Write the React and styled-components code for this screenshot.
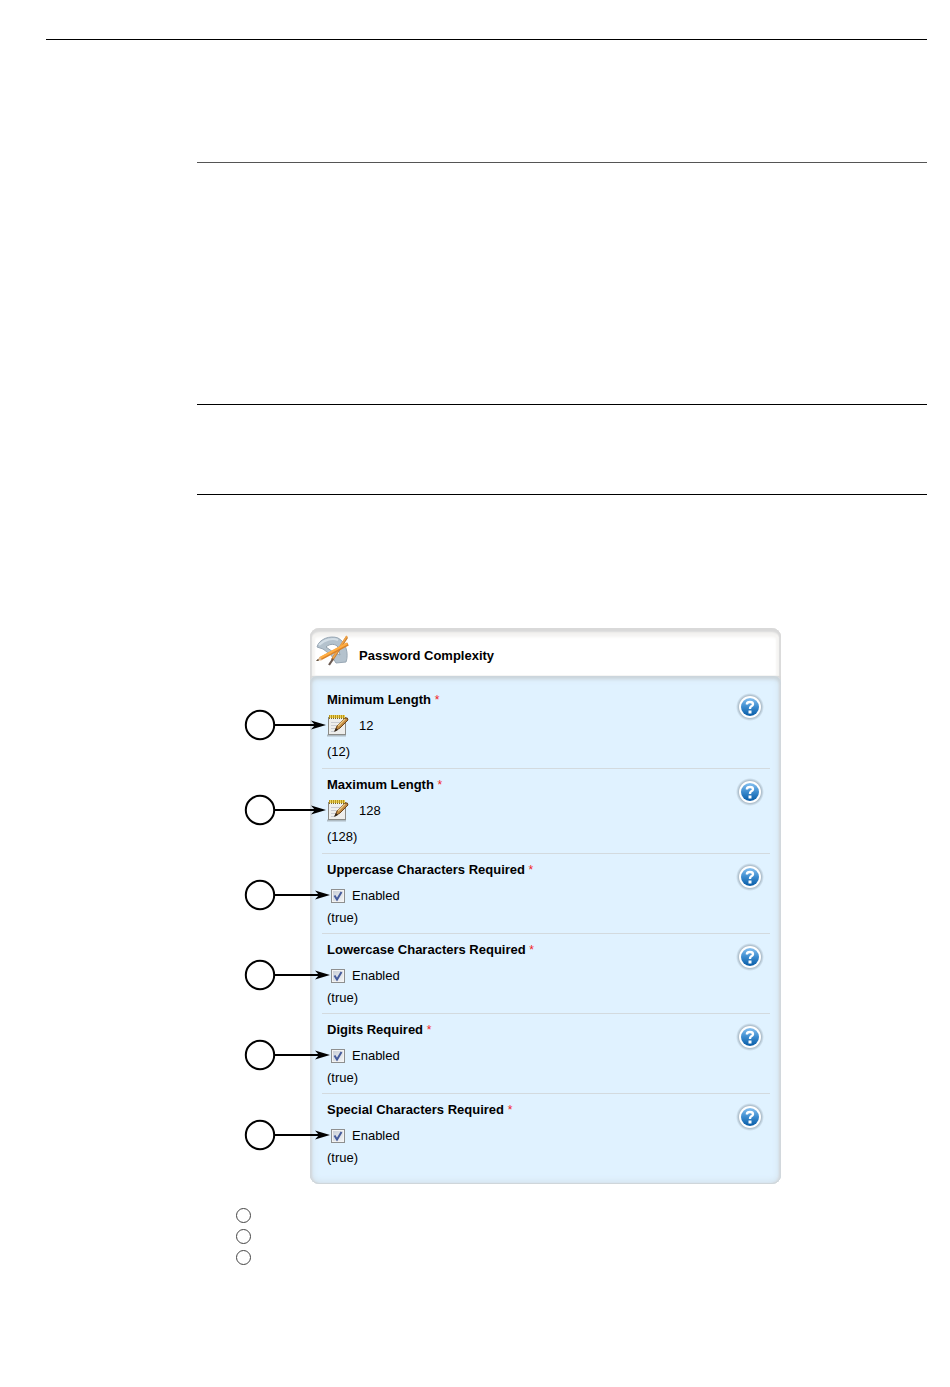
import { useState } from "react";
import styled, { createGlobalStyle } from "styled-components";

const ink = "#000";
const panelBlue = "#e0f2ff";
const line = "#d3dade";

const GlobalStyle = createGlobalStyle`
  body {
    margin: 0;
    background: #fff;
    color: ${ink};
    font-family: "Liberation Sans", Arial, sans-serif;
    font-size: 13px;
    line-height: 16px;
  }
`;

const Page = styled.div`
  padding: 39px 23px 0 46px;
`;

const PageHeader = styled.header`
  border-top: 1px solid ${ink};
  padding-bottom: 122px;
`;

const Content = styled.main`
  margin-left: 151px;
`;

const Section = styled.section`
  border-top: 1px solid ${(props) => props.$color || ink};
  padding-bottom: ${(props) => props.$space}px;
`;

const Figure = styled.figure`
  margin: 0 0 0 113px;
  max-width: 471px;
`;

const Panel = styled.form`
  border-radius: 9px;
  background: #d9d9d9;
`;

const PanelHeader = styled.div`
  display: flex;
  align-items: center;
  gap: 10px;
  padding: 7px 6px 8px;
  border-radius: 9px 9px 0 0;
  background: #fff;
  box-shadow:
    inset 0 4px 2px #d9d9d9,
    inset 2px 0 1px #dcdcdc,
    inset -2px 0 1px #dcdcdc,
    inset 5px 0 2px #f6f5f3,
    inset -5px 0 2px #f6f5f3,
    inset 0 9px 3px #f4f3f1;
`;

const Title = styled.h2`
  margin: 8px 0 0;
  font-size: 13px;
  font-weight: bold;
`;

const PanelBody = styled.div`
  padding: 8px 11px 10px 12px;
  border-radius: 7px 7px 9px 9px;
  background: ${panelBlue};
  box-shadow:
    inset 0 -1px 0 #cfd6da,
    inset 0 3px 3px #cbd5db,
    inset 2px 0 2px #d6dade,
    inset -2px 0 2px #d6dade,
    inset 0 0 7px 2px #d2dfe8;
`;

const Row = styled.div`
  position: relative;
  display: flex;
  justify-content: space-between;
  padding: 8px 8px 0 5px;
  border-bottom: 1px solid ${line};

  &:last-child {
    border-bottom-color: transparent;
  }
`;

const Field = styled.div`
  display: flex;
  flex-direction: column;
`;

const Name = styled.label`
  font-weight: bold;
`;

const Star = styled.span`
  color: #f21c24;
  font-size: 12px;
  font-weight: normal;
`;

const Value = styled.div`
  display: flex;
  align-items: center;
  gap: ${(props) => props.$gap}px;
  height: 24px;
  margin-top: 6px;
`;

const Hint = styled.div`
  padding: ${(props) => (props.$tight ? "2px 0 7px" : "6px 0 8px")};
`;

const IconButton = styled.button`
  display: block;
  align-self: flex-start;
  padding: 0;
  border: 0;
  background: none;
  cursor: pointer;

  svg {
    display: block;
  }
`;

const HelpButton = styled(IconButton)`
  margin-top: 3px;
  border-radius: 50%;
`;

const Checkbox = styled.input`
  appearance: none;
  width: 14px;
  height: 14px;
  margin: 0 0 0 4px;
  border: 1px solid #8e8f8f;
  background: linear-gradient(135deg, #c6ccd5, #f5f6f7);
  box-shadow: inset 0 0 0 1px #f4f4f4;
`;

const CheckWrap = styled.span`
  display: grid;

  > * {
    grid-area: 1 / 1;
  }

  svg {
    margin-left: 4px;
    pointer-events: none;
  }
`;

const CalloutMark = styled.svg`
  position: absolute;
  top: 25px;
  left: -78px;
  pointer-events: none;
`;

const Legend = styled.ol`
  display: flex;
  flex-direction: column;
  gap: 6px;
  margin: 24px 0 0 39px;
  padding: 0 0 121px;
  list-style: none;
`;

const LegendMark = styled.li`
  box-sizing: border-box;
  width: 15px;
  height: 15px;
  border: 1px solid #444;
  border-radius: 50%;
`;

function DraftingIcon() {
  return (
    <svg width="33" height="33" viewBox="0 0 33 33" aria-hidden="true">
      <path
        d="M1 12 C3 4 14 0 22 3 C30 7 33 19 30 27 L20 28 L15 20 L7 14 Z"
        fill="#b4c2cd"
        stroke="#98a7b4"
      />
      <path d="M3 10 C9 4 17 3 22 5" fill="none" stroke="#d3dee6" strokeWidth="2" />
      <path d="M10 12 C14 8 20 9 22 12 L24 20 L17 17 Z" fill="#fff" stroke="#93a2ae" />
      <path d="M16 25 L31 2" stroke="#c47a30" strokeWidth="2.6" />
      <path d="M17 23 L31 1" stroke="#f0a447" strokeWidth="1.6" />
      <path d="M13 30 L17 24" stroke="#6b5a52" strokeWidth="2.2" />
      <path d="M4 24 L32 9" stroke="#d98229" strokeWidth="3.2" />
      <path d="M4 23 L31 8.5" stroke="#ffad42" strokeWidth="2" />
      <path d="M0 26 L4 22 L6 25 Z" fill="#e0b98e" />
      <path d="M0 26 L2 24 L3 25.5 Z" fill="#3b3028" />
    </svg>
  );
}

function NotepadIcon() {
  return (
    <svg width="22" height="23" viewBox="0 0 22 23" aria-hidden="true">
      <path d="M0 21.5 H19" stroke="#aebbc3" strokeWidth="2" />
      <rect x="1.5" y="3.5" width="17" height="17" fill="#eeeeec" stroke="#8b8b87" />
      <path d="M4 8.5 H15 M4 11.5 H13 M4 14.5 H10 M4 17.5 H8" stroke="#c9cbd0" />
      <path d="M2 2.5 H18" stroke="#ecd25a" strokeWidth="3" />
      <path d="M2 2.5 H18" stroke="#b8951a" strokeWidth="3" strokeDasharray="1 1" />
      <path d="M2 4.5 H18" stroke="#7d6a1e" strokeDasharray="1 1" />
      <path d="M8 17 L10 12 L18 4 Q21 3 21 6 L13 14 Z" fill="#c18a42" stroke="#6b4418" />
      <path d="M11 12 L18 5" stroke="#edc985" strokeWidth="1.5" />
      <path d="M7 18 L9 14 L11 16 Z" fill="#30271e" />
    </svg>
  );
}

function HelpIcon() {
  return (
    <svg width="24" height="24" viewBox="0 0 24 24" overflow="visible" aria-hidden="true">
      <defs>
        <linearGradient id="help-fill" x1="0" y1="0" x2="0" y2="1">
          <stop offset="0" stopColor="#85c0f0" />
          <stop offset="0.5" stopColor="#3c8bce" />
          <stop offset="1" stopColor="#075ba6" />
        </linearGradient>
        <radialGradient id="help-shade">
          <stop offset="0.7" stopColor="#8696a3" stopOpacity="0.9" />
          <stop offset="1" stopColor="#8696a3" stopOpacity="0" />
        </radialGradient>
      </defs>
      <circle cx="12" cy="12" r="14" fill="url(#help-shade)" />
      <circle cx="12" cy="12" r="11" fill="#fff" />
      <circle cx="12" cy="12" r="9" fill="url(#help-fill)" />
      <path
        d="M9 9.5 V8.5 Q9.5 7 12 7 Q15 7 15 9.2 Q15 10.7 12.8 11.7 Q12 12.2 12 14"
        fill="none"
        stroke="#fff"
        strokeWidth="2.4"
      />
      <rect x="10.5" y="15.5" width="3" height="3" fill="#fff" />
    </svg>
  );
}

function Callout({ tip }) {
  return (
    <CalloutMark width="86" height="32" viewBox="0 0 86 32" aria-hidden="true">
      <circle cx="16" cy="16" r="14.2" fill="#fff" stroke={ink} strokeWidth="2" />
      <path d={`M30 16 H${tip - 8}`} stroke={ink} strokeWidth="2" />
      <path d={`M${tip} 16 L${tip - 15} 11.5 L${tip - 11} 16 L${tip - 15} 20.5 Z`} fill={ink} />
    </CalloutMark>
  );
}

function Help({ name }) {
  return (
    <HelpButton type="button" aria-label={`Help: ${name}`}>
      <HelpIcon />
    </HelpButton>
  );
}

function LengthRow({ id, name, value }) {
  return (
    <Row>
      <Field>
        <Name htmlFor={id}>
          {name} <Star>*</Star>
        </Name>
        <Value $gap={10}>
          <IconButton id={id} type="button">
            <NotepadIcon />
          </IconButton>
          <span>{value}</span>
        </Value>
        <Hint>({value})</Hint>
      </Field>
      <Help name={name} />
      <Callout tip={82} />
    </Row>
  );
}

function ToggleRow({ id, name }) {
  const [checked, setChecked] = useState(true);
  return (
    <Row>
      <Field>
        <Name as="div">
          {name} <Star>*</Star>
        </Name>
        <Value $gap={7}>
          <CheckWrap>
            <Checkbox
              id={id}
              type="checkbox"
              checked={checked}
              onChange={(e) => setChecked(e.target.checked)}
            />
            {checked && (
              <svg width="14" height="14" viewBox="0 0 14 14" aria-hidden="true">
                <path d="M3.5 6.5 L6 10.5 L10.5 3" fill="none" stroke="#465c9c" strokeWidth="2" />
              </svg>
            )}
          </CheckWrap>
          <label htmlFor={id}>Enabled</label>
        </Value>
        <Hint $tight>(true)</Hint>
      </Field>
      <Help name={name} />
      <Callout tip={86} />
    </Row>
  );
}

const lengths = [
  { id: "min-length", name: "Minimum Length", value: 12 },
  { id: "max-length", name: "Maximum Length", value: 128 },
];

const toggles = [
  { id: "uppercase", name: "Uppercase Characters Required" },
  { id: "lowercase", name: "Lowercase Characters Required" },
  { id: "digits", name: "Digits Required" },
  { id: "special", name: "Special Characters Required" },
];

export default function App() {
  return (
    <Page>
      <GlobalStyle />
      <PageHeader />
      <Content>
        <Section $color="#555" $space={241} />
        <Section $space={89} />
        <Section $space={133} />
        <Figure>
          <Panel>
            <PanelHeader>
              <DraftingIcon />
              <Title>Password Complexity</Title>
            </PanelHeader>
            <PanelBody>
              {lengths.map((item) => (
                <LengthRow key={item.id} {...item} />
              ))}
              {toggles.map((item) => (
                <ToggleRow key={item.id} {...item} />
              ))}
            </PanelBody>
          </Panel>
        </Figure>
        <Legend>
          <LegendMark />
          <LegendMark />
          <LegendMark />
        </Legend>
      </Content>
    </Page>
  );
}
